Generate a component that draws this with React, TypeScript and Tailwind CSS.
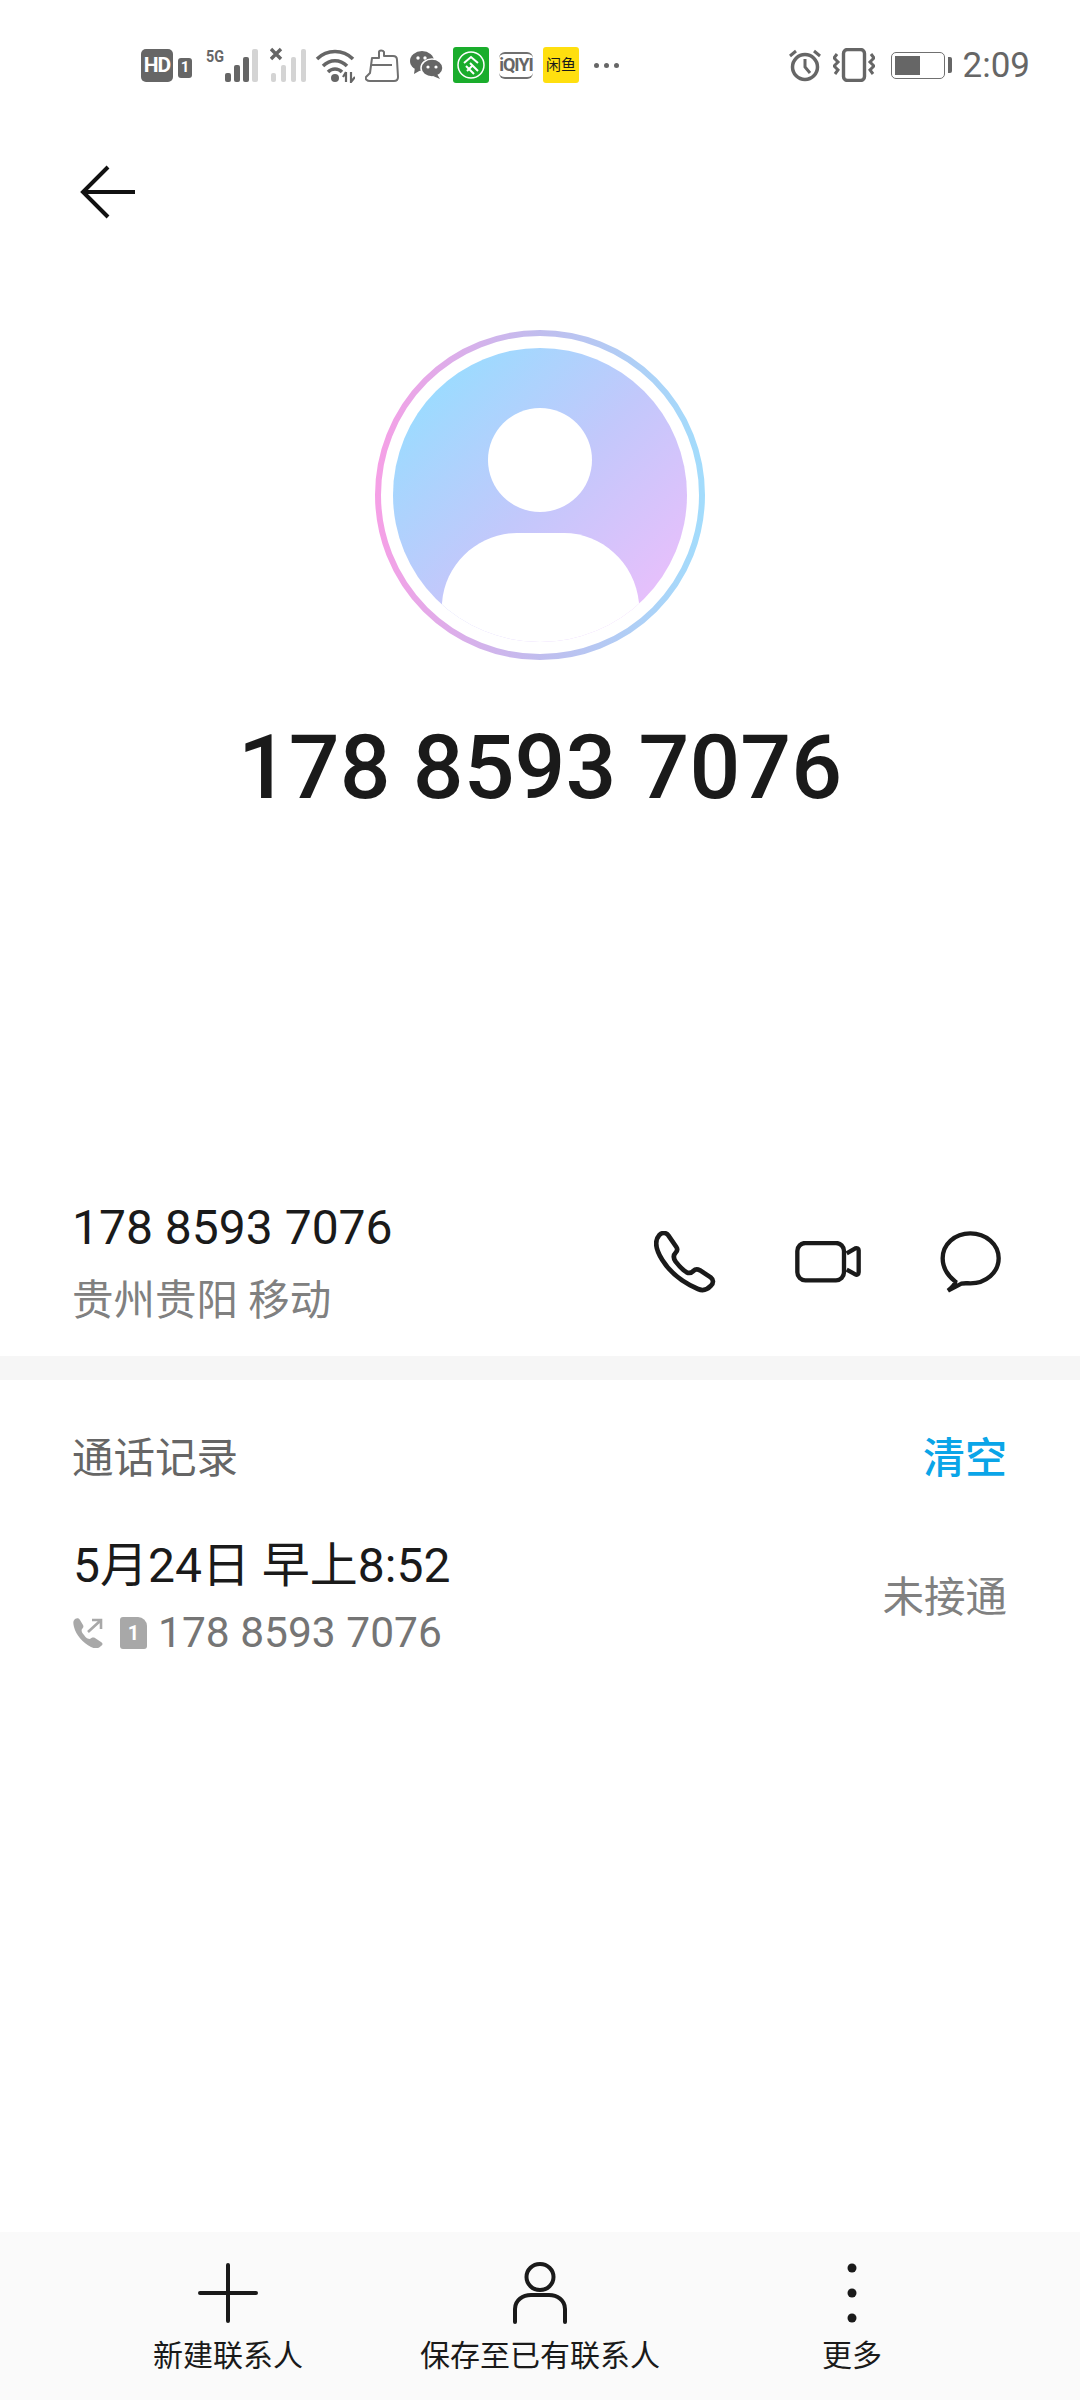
import React from "react";

const Signal = ({ on }: { on: number }) => {
  const bars = [
    { x: 0, h: 9 },
    { x: 9, h: 17 },
    { x: 18, h: 25 },
    { x: 27, h: 33 },
  ];
  return (
    <>
      {bars.map((b, i) => (
        <rect
          key={b.x}
          x={b.x}
          y={33 - b.h}
          width={6}
          height={b.h}
          rx={2}
          fill={i < on ? "#666666" : "#d4d4d4"}
        />
      ))}
    </>
  );
};

const StatusLeft = () => (
  <div className="flex items-center">
    <div className="w-[32px] h-[33px] rounded-[5px] bg-[#666666] flex items-center justify-center text-white text-[21px] font-bold leading-none tracking-[-1px]">
      HD
    </div>
    <div className="ml-[5px] mt-[5px] w-[14px] h-[20px] rounded-[3px] bg-[#666666] flex items-center justify-center text-white text-[15px] font-bold leading-none">
      1
    </div>
    {/* 5G + signal */}
    <svg width="54" height="36" viewBox="0 0 54 36" className="ml-[14px]">
      <text x="0" y="15" fontSize="17" fontWeight="700" fill="#666666" fontFamily="Roboto" textLength="18" lengthAdjust="spacingAndGlyphs">
        5G
      </text>
      <g transform="translate(19 2)">
        <Signal on={3} />
      </g>
    </svg>
    <svg width="36" height="36" viewBox="0 0 36 36" className="ml-[10px]">
      <path d="M1 2l10 10M11 2L1 12" stroke="#666666" strokeWidth="3.4" />
      <g transform="translate(1 2)">
        <rect x="0" y="24" width="5" height="9" rx="2" fill="#d4d4d4" />
        <rect x="10" y="16" width="5" height="17" rx="2" fill="#d4d4d4" />
        <rect x="20" y="8" width="5" height="25" rx="2" fill="#d4d4d4" />
        <rect x="30" y="0" width="5" height="33" rx="2" fill="#d4d4d4" />
      </g>
    </svg>
    {/* wifi */}
    <svg width="40" height="35" viewBox="0 0 40 35" className="ml-[9px]" fill="none">
      <path d="M2 11C12 1 28 1 38 11" stroke="#666666" strokeWidth="3.5" />
      <path d="M8 18C15 11 25 11 32 18" stroke="#666666" strokeWidth="3.5" />
      <path d="M13 24C17 20 23 20 27 24" stroke="#666666" strokeWidth="3.5" />
      <circle cx="20" cy="30" r="4" fill="#666666" />
      <path d="M31 24v10M28 29l3-5M36 24v10l4-5" stroke="#666666" strokeWidth="2.2" />
    </svg>
    {/* clip board */}
    <svg width="34" height="33" viewBox="0 0 34 33" className="ml-[10px]" fill="none">
      <path
        d="M7 9h7V3c0-2 4-2 5 0v4h9c3 0 4 2 4 4l1 17c0 3-2 4-4 4H5c-3 0-5-2-4-4l4-4z"
        stroke="#707070"
        strokeWidth="2"
        strokeLinejoin="round"
      />
      <path d="M6 16h21" stroke="#707070" strokeWidth="2" />
    </svg>
    {/* wechat */}
    <svg width="33" height="28" viewBox="0 0 33 28" className="ml-[11px]">
      <ellipse cx="12" cy="10" rx="12" ry="10" fill="#666666" />
      <path d="M5 16l-1 7 7-4z" fill="#666666" />
      <ellipse cx="22" cy="17" rx="11" ry="9" fill="#666666" stroke="#ffffff" strokeWidth="1.5" />
      <path d="M27 23l3 5-7-3z" fill="#666666" />
      <circle cx="8" cy="7" r="1.7" fill="#ffffff" />
      <circle cx="15" cy="7" r="1.7" fill="#ffffff" />
      <circle cx="18" cy="16" r="1.6" fill="#ffffff" />
      <circle cx="26" cy="16" r="1.6" fill="#ffffff" />
    </svg>
    {/* green app */}
    <svg width="36" height="36" viewBox="0 0 36 36" className="ml-[10px]" fill="none">
      <rect width="36" height="36" rx="3" fill="#1aad2c" />
      <circle cx="18" cy="18" r="13" stroke="#ffffff" strokeWidth="1.5" />
      <path d="M11 16l7-6 7 6M13 19l8 8M17 16l8 8M14 24l6-6" stroke="#ffffff" strokeWidth="2" />
    </svg>
    {/* iqiyi */}
    <div className="ml-[10px] w-[34px] h-[27px] flex items-center justify-center text-[#666666] text-[18px] font-bold leading-none tracking-[-1px] border-y-[2px] border-[#707070] rounded-[6px]">
      iQIYI
    </div>
    <div className="ml-[10px] w-[36px] h-[36px] rounded-[3px] bg-[#ffdf0f] flex items-center justify-center text-[#1a1a1a] text-[15px] leading-none">
      闲鱼
    </div>
    <div className="ml-[15px] flex gap-[5px]">
      <div className="w-[5px] h-[5px] rounded-full bg-[#666666]" />
      <div className="w-[5px] h-[5px] rounded-full bg-[#666666]" />
      <div className="w-[5px] h-[5px] rounded-full bg-[#666666]" />
    </div>
  </div>
);

const StatusRight = () => (
  <div className="flex items-center text-[#666666]">
    <svg width="34" height="34" viewBox="0 0 34 34" fill="none" stroke="#666666">
      <circle cx="17" cy="19" r="12.5" strokeWidth="3.5" />
      <path d="M17 11v8l5 6" strokeWidth="3" />
      <path d="M2 8l6-5M32 8l-6-5" strokeWidth="3" />
    </svg>
    <svg width="42" height="34" viewBox="0 0 42 34" fill="none" stroke="#666666" className="ml-[11px]">
      <rect x="10.5" y="1.5" width="21" height="31" rx="4" strokeWidth="3.4" />
      <path d="M4 6l-3 4 4 4-4 4 4 4-3 4M38 6l3 4-4 4 4 4-4 4 3 4" strokeWidth="3" />
    </svg>
    <div className="ml-[16px] flex items-center">
      <div className="w-[54px] h-[27px] rounded-[5px] border-[1.5px] border-[#707070] p-[3px]">
        <div className="w-[25px] h-full bg-[#666666]" />
      </div>
      <div className="ml-[3px] w-[4px] h-[16px] rounded-r-[2px] bg-[#666666]" />
    </div>
    <span className="ml-[11px] text-[35px] leading-none">2:09</span>
  </div>
);

const Avatar = () => (
  <svg width="330" height="330" viewBox="0 0 330 330" className="mx-auto mt-[109px] block">
    <defs>
      <linearGradient id="ring" x1="0" y1="0.5" x2="1" y2="0.5">
        <stop offset="0" stopColor="#f5a0e6" />
        <stop offset="0.5" stopColor="#c0bdee" />
        <stop offset="1" stopColor="#a3dcfc" />
      </linearGradient>
      <linearGradient id="fill" x1="0.12" y1="0.12" x2="0.88" y2="0.88">
        <stop offset="0" stopColor="#9adcff" />
        <stop offset="0.5" stopColor="#c2c8fb" />
        <stop offset="1" stopColor="#e8bffb" />
      </linearGradient>
      <clipPath id="inner">
        <circle cx="165" cy="165" r="147" />
      </clipPath>
    </defs>
    <circle cx="165" cy="165" r="162" fill="none" stroke="url(#ring)" strokeWidth="6" />
    <circle cx="165" cy="165" r="147" fill="url(#fill)" />
    <circle cx="165" cy="130" r="52" fill="#ffffff" />
    <path
      d="M67 273C70 232 105 203 142 203H189C226 203 260 232 264 273V330H67Z"
      fill="#ffffff"
      clipPath="url(#inner)"
    />
  </svg>
);

const ActionIcons = () => (
  <div className="flex items-center pb-[3px]">
    <svg width="62" height="62" viewBox="100 88 186 186" fill="none" stroke="#1a1a1a" strokeWidth="14">
      <path d="M116 100C126 91 137 93 143 101L167 136C171 142 170 148 165 153C158 160 158 170 165 180C175 193 188 206 198 212C206 216 212 214 218 208C224 202 230 202 238 206L270 227C279 234 279 244 271 252C261 263 248 269 232 262C190 244 150 215 125 175C108 148 98 120 116 100Z" />
    </svg>
    <svg width="66" height="42" viewBox="525 118 198 126" fill="none" stroke="#1a1a1a" strokeWidth="13" className="ml-[79px]">
      <rect x="532" y="124" width="140" height="112" rx="24" />
      <path d="M680 155L706 140C711 138 716 140 716 146V212C716 218 711 221 706 218L680 204" strokeLinejoin="round" />
    </svg>
    <svg width="62" height="62" viewBox="964 88 186 186" fill="none" stroke="#1a1a1a" strokeWidth="13" className="ml-[79px]">
      <path d="M1010 240C985 220 972 195 972 170C972 128 1008 95 1055 95C1102 95 1140 128 1140 170C1140 212 1102 245 1055 245C1045 245 1035 244 1028 246L988 267C1000 258 1008 250 1010 240Z" />
    </svg>
  </div>
);

const BottomItem = ({ icon, label }: { icon: React.ReactNode; label: string }) => (
  <div className="flex flex-col items-center">
    <div className="h-[62px] flex items-center justify-center">{icon}</div>
    <span className="mt-[12px] text-[30px] leading-[40px] text-[#1a1a1a] whitespace-nowrap">{label}</span>
  </div>
);

const App = () => {
  return (
    <div className="w-[1080px] h-[2400px] bg-white flex flex-col font-['Roboto','Noto_Sans_CJK_SC',sans-serif] text-[#1a1a1a]">
      {/* status bar */}
      <div className="h-[130px] shrink-0 flex items-center justify-between pl-[141px] pr-[50px]">
        <StatusLeft />
        <StatusRight />
      </div>

      <div className="mt-[35px] ml-[80px]">
        <svg width="56" height="56" viewBox="0 0 56 56" fill="none" stroke="#111111" strokeWidth="4" className="block">
          <path d="M55 27H3M28 2L3 27l25 25" />
        </svg>
      </div>

      <Avatar />

      <div className="mt-[53px] text-center text-[89.5px] leading-[110px] font-medium">178 8593 7076</div>

      {/* number row */}
      <div className="mt-[375px] pl-[72px] pr-[78px] pb-[27px] flex items-center justify-between">
        <div className="flex flex-col gap-[15px]">
          <span className="text-[48px] leading-[60px]">178 8593 7076</span>
          <span className="text-[41.5px] leading-[56px] text-[#808080]">贵州贵阳 移动</span>
        </div>
        <ActionIcons />
      </div>

      <div className="h-[24px] bg-[#f6f6f6]" />

      {/* call log */}
      <div className="mt-[51px] pl-[72px] pr-[73px] flex items-center justify-between text-[42px] leading-[56px]">
        <span className="text-[#666666] text-[41.5px]">通话记录</span>
        <span className="text-[#0aa5e8] font-medium">清空</span>
      </div>

      <div className="mt-[49px] pl-[73px] pr-[73px] flex items-center justify-between">
        <div className="flex flex-col gap-[11px]">
          <span className="text-[48px] leading-[60px]">5月24日 早上8:52</span>
          <div className="flex items-center">
            <svg width="30" height="30" viewBox="0 0 30 30" className="block">
              <path
                d="M2 1c2-1 4-1 5 1l3 5c1 2 0 3-1 4-1 2 0 4 2 6 2 3 4 4 6 4 1-1 3-2 5-1l6 4c2 1 2 3 0 4-3 3-6 3-10 1C10 25 3 17 1 9 0 5 0 3 2 1Z"
                fill="#a8a8a8"
              />
              <path d="M15 14L27 3M19 2h9v9" fill="none" stroke="#a8a8a8" strokeWidth="2.6" />
            </svg>
            <div className="ml-[17px] w-[27px] h-[32px] rounded-[3px] rounded-tr-[9px] bg-[#a8a8a8] flex items-center justify-center text-white text-[20px] font-bold leading-none">
              1
            </div>
            <span className="ml-[11px] text-[42.5px] leading-[52px] text-[#757575]">178 8593 7076</span>
          </div>
        </div>
        <span className="text-[41.5px] leading-[56px] text-[#808080]">未接通</span>
      </div>

      {/* bottom toolbar */}
      <div className="mt-auto h-[168px] shrink-0 bg-[#fafafa] pt-[30px] px-[72px] grid grid-cols-3">
        <BottomItem
          label="新建联系人"
          icon={
            <svg width="60" height="60" viewBox="0 0 60 60" stroke="#1a1a1a" strokeWidth="4" strokeLinecap="round">
              <path d="M30 2v56M2 30h56" />
            </svg>
          }
        />
        <BottomItem
          label="保存至已有联系人"
          icon={
            <svg width="54" height="62" viewBox="0 0 54 62" fill="none" stroke="#1a1a1a" strokeWidth="4" strokeLinecap="round">
              <ellipse cx="27" cy="15" rx="13.5" ry="13" />
              <path d="M2 60V47C2 38 10 33 18 33H36C44 33 52 38 52 47V60" />
            </svg>
          }
        />
        <BottomItem
          label="更多"
          icon={
            <svg width="12" height="62" viewBox="0 0 12 62" fill="#1a1a1a">
              <circle cx="6" cy="6" r="4.5" />
              <circle cx="6" cy="31" r="4.5" />
              <circle cx="6" cy="56" r="4.5" />
            </svg>
          }
        />
      </div>
    </div>
  );
};

export default App;
